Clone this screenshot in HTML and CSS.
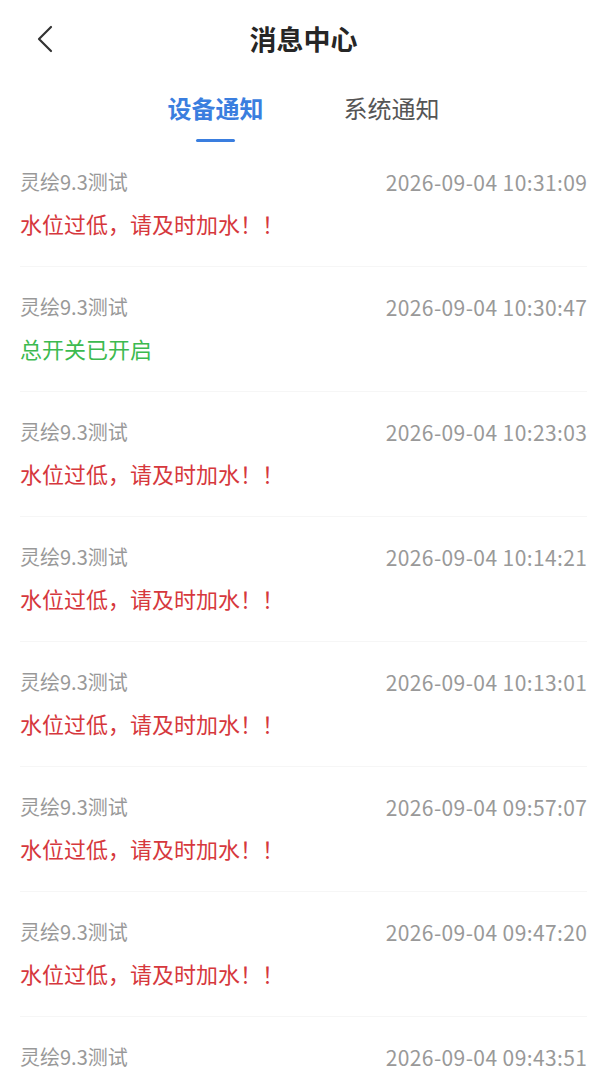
FILE: index.html
```html
<!DOCTYPE html>
<html lang="zh-CN">

<head>
  <meta charset="UTF-8">
  <meta name="viewport" content="width=device-width, initial-scale=1.0">
  <title>消息中心</title>
  <link rel="stylesheet" href="styles.css">
</head>

<body>
  <div class="page">
    <header class="nav">
      <button type="button" class="back" aria-label="返回">
        <svg width="18" height="28" viewBox="0 0 18 28" fill="none">
          <path d="M15 2 L3 14 L15 26" stroke="#333" stroke-width="2.2" stroke-linecap="round" stroke-linejoin="round"/>
        </svg>
      </button>
      <h1 class="title">消息中心</h1>
      <span></span>
    </header>

    <nav class="tabs">
      <a class="tab active">设备通知</a>
      <a class="tab">系统通知</a>
    </nav>

    <ul class="list">
      <li class="item">
        <div class="row"><span class="name">灵绘9.3测试</span><span class="time">2026-09-04 10:31:09</span></div>
        <p class="msg warn">水位过低，请及时加水！！</p>
      </li>
      <li class="item">
        <div class="row"><span class="name">灵绘9.3测试</span><span class="time">2026-09-04 10:30:47</span></div>
        <p class="msg ok">总开关已开启</p>
      </li>
      <li class="item">
        <div class="row"><span class="name">灵绘9.3测试</span><span class="time">2026-09-04 10:23:03</span></div>
        <p class="msg warn">水位过低，请及时加水！！</p>
      </li>
      <li class="item">
        <div class="row"><span class="name">灵绘9.3测试</span><span class="time">2026-09-04 10:14:21</span></div>
        <p class="msg warn">水位过低，请及时加水！！</p>
      </li>
      <li class="item">
        <div class="row"><span class="name">灵绘9.3测试</span><span class="time">2026-09-04 10:13:01</span></div>
        <p class="msg warn">水位过低，请及时加水！！</p>
      </li>
      <li class="item">
        <div class="row"><span class="name">灵绘9.3测试</span><span class="time">2026-09-04 09:57:07</span></div>
        <p class="msg warn">水位过低，请及时加水！！</p>
      </li>
      <li class="item">
        <div class="row"><span class="name">灵绘9.3测试</span><span class="time">2026-09-04 09:47:20</span></div>
        <p class="msg warn">水位过低，请及时加水！！</p>
      </li>
      <li class="item">
        <div class="row"><span class="name">灵绘9.3测试</span><span class="time">2026-09-04 09:43:51</span></div>
        <p class="msg warn">水位过低，请及时加水！！</p>
      </li>
    </ul>
  </div>
</body>

</html>
```

FILE: styles.css
```css
* {
  box-sizing: border-box;
}

body {
  margin: 0;
  background: #fff;
  font-family: "Noto Sans CJK SC", "Noto Sans", sans-serif;
  color: #333;
}

.page {
  height: 1080px;
  overflow: hidden;
}

.nav {
  display: grid;
  grid-template-columns: 1fr auto 1fr;
  align-items: center;
  height: 78px;
}

.back {
  justify-self: start;
  margin-left: 36px;
  padding: 0;
  border: 0;
  background: none;
  display: flex;
}

.title {
  margin: 0;
  font-size: 27px;
  line-height: 34px;
  font-weight: 700;
  color: #262626;
}

.tabs {
  display: flex;
  justify-content: center;
  gap: 80px;
  padding-top: 15px;
}

.tab {
  display: flex;
  flex-direction: column;
  align-items: center;
  font-size: 24px;
  line-height: 30px;
  color: #555;
}

.tab::after {
  content: "";
  width: 39px;
  height: 3px;
  margin-top: 16px;
  border-radius: 2px;
  background: transparent;
}

.tab.active {
  color: #3a7edf;
  font-weight: 700;
}

.tab.active::after {
  background: #3a7edf;
}

.list {
  list-style: none;
  margin: 0;
  padding: 0 20px;
}

.item {
  padding: 28px 0 31px;
  border-bottom: 1px solid #f6f6f6;
}

.row {
  display: flex;
  justify-content: space-between;
  font-size: 20px;
  line-height: 24px;
  color: #999;
}

.time {
  font-size: 21px;
  letter-spacing: 0.4px;
  margin-right: -0.4px;
}

.msg {
  margin: 17px 0 0;
  font-size: 22px;
  line-height: 24px;
}

.warn {
  color: #d6383d;
}

.ok {
  color: #3cba4f;
}
```
